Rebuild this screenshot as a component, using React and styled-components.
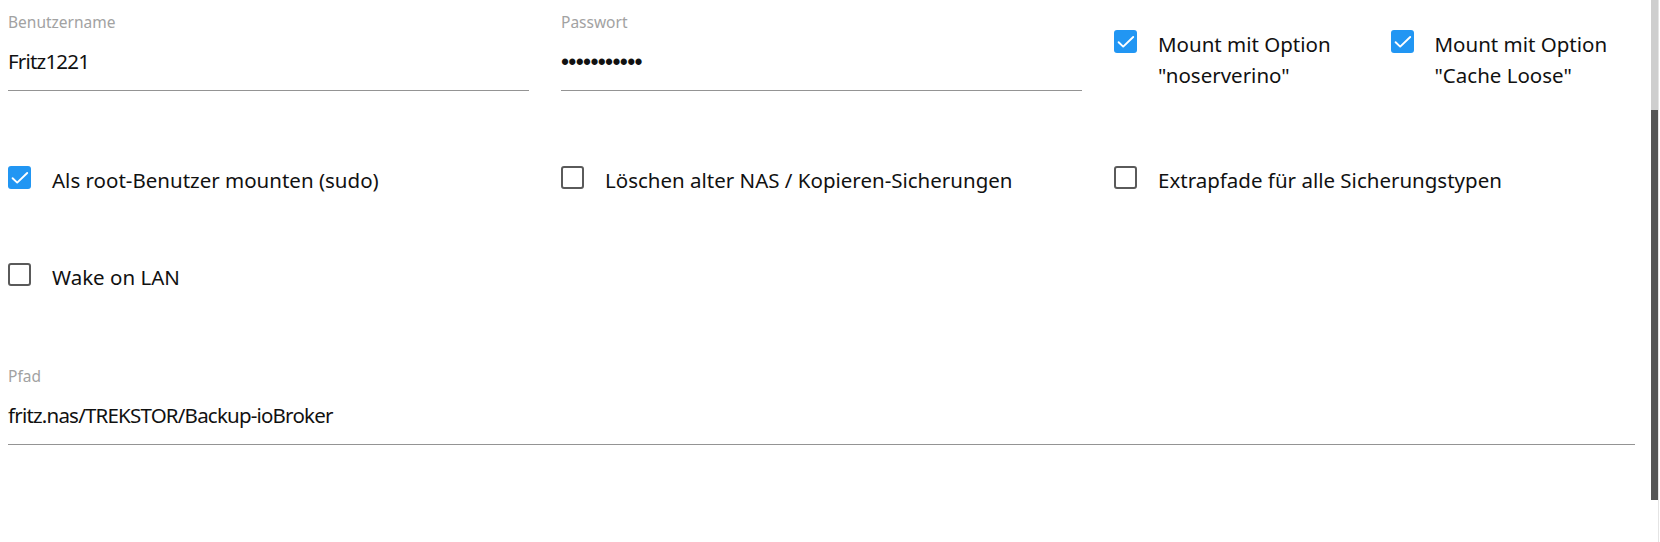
import React from "react";
import styled, { createGlobalStyle } from "styled-components";

const GlobalStyle = createGlobalStyle`
  html, body {
    margin: 0;
    padding: 0;
    background: #ffffff;
    overflow: hidden;
  }
  body {
    font-family: "Noto Sans", "Open Sans", sans-serif;
    color: rgba(0, 0, 0, 0.87);
  }
`;

const Page = styled.div`
  display: flex;
  flex-direction: column;
  padding-left: 8px;
  width: 1659px;
  height: 542px;
  box-sizing: border-box;
`;

const Row = styled.div`
  display: grid;
  grid-template-columns: repeat(6, 276.5px);
  align-items: start;
  margin-top: ${(p) => p.$top || 0}px;
`;

const Field = styled.div`
  grid-column: span ${(p) => p.$span || 2};
  display: flex;
  flex-direction: column;
  padding: 12px 0 14px;
  margin-right: 32px;
  border-bottom: 1px solid #949494;
`;

const Label = styled.div`
  font-size: 15.5px;
  line-height: 20px;
  color: #a2a2a2;
  height: 20px;
`;

const Value = styled.div`
  margin-top: 14px;
  font-size: 20.5px;
  line-height: 30px;
  height: 30px;
  letter-spacing: -0.8px;
  white-space: nowrap;
  color: #111111;
`;

const Dots = styled.span`
  font-family: "Liberation Sans", Arial, sans-serif;
  font-size: 23px;
  letter-spacing: -0.7px;
  color: #111111;
  position: relative;
  top: 1px;
`;

const CheckItem = styled.label`
  grid-column: span ${(p) => p.$span || 1};
  display: flex;
  align-items: flex-start;
  padding-top: ${(p) => p.$pad || 0}px;
  padding-right: 16px;
`;

const Box = styled.span`
  flex: none;
  width: 23px;
  height: 23px;
  margin-top: 1px;
  box-sizing: border-box;
  border-radius: 3px;
  display: flex;
  align-items: center;
  justify-content: center;
  background: ${(p) => (p.$checked ? "#2196f3" : "#ffffff")};
  border: ${(p) => (p.$checked ? "none" : "2.4px solid #5a5a5a")};
`;

const CheckText = styled.span`
  margin-left: 21px;
  font-size: 20.5px;
  line-height: 30.5px;
  color: #111111;
`;

const Scrollbar = styled.div`
  position: fixed;
  top: 0;
  right: 1px;
  width: 7px;
  height: 542px;
  border-right: 1px solid #e4e4e4;
  display: flex;
  flex-direction: column;
`;

const ScrollTrack = styled.div`
  height: 110px;
  background: #cecece;
`;

const ScrollThumb = styled.div`
  height: 390px;
  background: #555555;
`;

function Check({ checked }) {
  return (
    <Box $checked={checked}>
      {checked && (
        <svg width="23" height="23" viewBox="0 0 23 23">
          <polyline
            points="4.6,12.2 9.2,16.6 19.2,7"
            fill="none"
            stroke="#ffffff"
            strokeWidth="1.9"
            strokeLinecap="round"
            strokeLinejoin="round"
          />
        </svg>
      )}
    </Box>
  );
}

function CheckOption({ checked, children, pad, span }) {
  return (
    <CheckItem $pad={pad} $span={span}>
      <Check checked={checked} />
      <CheckText>{children}</CheckText>
    </CheckItem>
  );
}

export default function App() {
  return (
    <>
      <GlobalStyle />
      <Page>
        <Row>
          <Field>
            <Label>Benutzername</Label>
            <Value>Fritz1221</Value>
          </Field>
          <Field>
            <Label>Passwort</Label>
            <Value>
              <Dots>•••••••••••</Dots>
            </Value>
          </Field>
          <CheckOption checked pad={29}>
            Mount mit Option "noserverino"
          </CheckOption>
          <CheckOption checked pad={29}>
            Mount mit Option "Cache Loose"
          </CheckOption>
        </Row>
        <Row $top={74}>
          <CheckOption checked span={2}>
            Als root-Benutzer mounten (sudo)
          </CheckOption>
          <CheckOption span={2}>
            Löschen alter NAS / Kopieren-Sicherungen
          </CheckOption>
          <CheckOption span={2}>
            Extrapfade für alle Sicherungstypen
          </CheckOption>
        </Row>
        <Row $top={66}>
          <CheckOption span={2}>Wake on LAN</CheckOption>
        </Row>
        <Row $top={62}>
          <Field $span={6}>
            <Label>Pfad</Label>
            <Value>fritz.nas/TREKSTOR/Backup-ioBroker</Value>
          </Field>
        </Row>
      </Page>
      <Scrollbar>
        <ScrollTrack />
        <ScrollThumb />
      </Scrollbar>
    </>
  );
}
